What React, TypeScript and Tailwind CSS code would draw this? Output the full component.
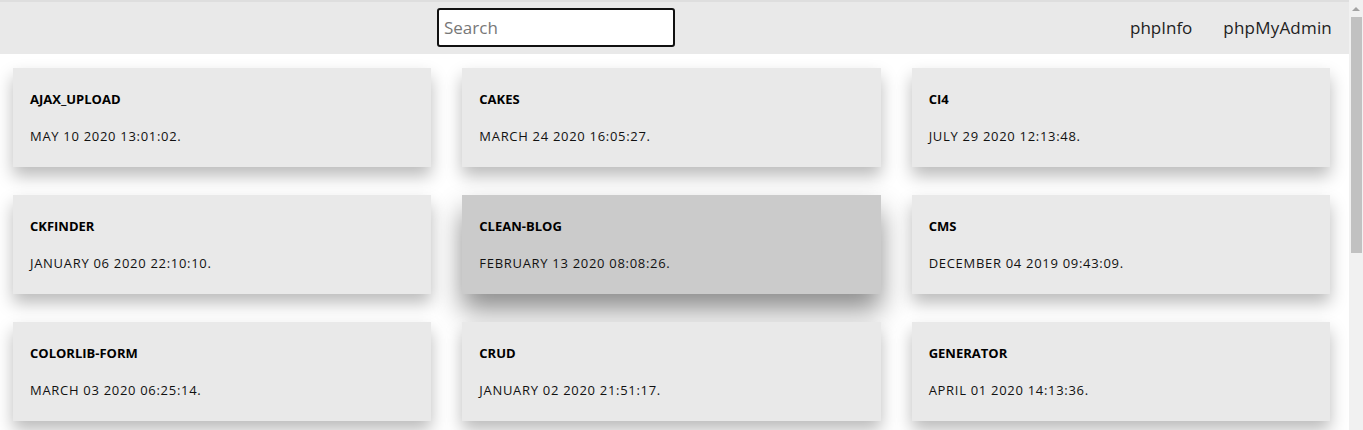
const projects = [
  { name: 'AJAX_UPLOAD', date: 'MAY 10 2020 13:01:02.' },
  { name: 'CAKES', date: 'MARCH 24 2020 16:05:27.' },
  { name: 'CI4', date: 'JULY 29 2020 12:13:48.' },
  { name: 'CKFINDER', date: 'JANUARY 06 2020 22:10:10.' },
  { name: 'CLEAN-BLOG', date: 'FEBRUARY 13 2020 08:08:26.', hover: true },
  { name: 'CMS', date: 'DECEMBER 04 2019 09:43:09.' },
  { name: 'COLORLIB-FORM', date: 'MARCH 03 2020 06:25:14.' },
  { name: 'CRUD', date: 'JANUARY 02 2020 21:51:17.' },
  { name: 'GENERATOR', date: 'APRIL 01 2020 14:13:36.' },
];

function Card({ name, date, hover }: { name: string; date: string; hover?: boolean }) {
  return (
    <div
      className={
        hover
          ? 'bg-[#cbcbcb] px-[17px] py-[22px] shadow-[0_16px_26px_rgba(0,0,0,0.45)]'
          : 'bg-[#e9e9e9] px-[17px] py-[22px] shadow-[0_9px_16px_rgba(0,0,0,0.27)]'
      }
    >
      <div className="text-[13px] leading-[18px] font-bold text-black">{name}</div>
      <div className="mt-[19px] text-[13px] leading-[18px] tracking-[0.7px] text-[#111]">{date}</div>
    </div>
  );
}

function Scrollbar() {
  // fake classic scrollbar on the right edge
  return (
    <div className="w-[14px] shrink-0 bg-[#f1f1f1] flex flex-col items-center">
      <div className="h-[17px] flex items-center justify-center">
        <div className="w-0 h-0 border-l-[4px] border-r-[4px] border-b-[4px] border-l-transparent border-r-transparent border-b-[#a3a3a3]" />
      </div>
      <div className="w-[11px] h-[236px] bg-[#c1c1c1]" />
    </div>
  );
}

export default function App() {
  return (
    <div className="flex h-[430px] overflow-hidden bg-white" style={{ fontFamily: '"Open Sans", "Liberation Sans", sans-serif' }}>
      <div className="flex-1 min-w-0">
        <header className="h-[54px] bg-[#e9e9e9] border-t-2 border-[#dedede] flex items-center">
          <input
            placeholder="Search"
            className="ml-[437px] w-[238px] h-[39px] mt-[-2px] bg-white border-2 border-[#111] rounded-[3px] px-[5px] text-[17px] outline-none placeholder:text-[#777]"
          />
          <nav className="ml-auto mr-[17px] flex gap-[31px] text-[17px] text-[#222]">
            <a href="#">phpInfo</a>
            <a href="#" className="tracking-[0.2px]">phpMyAdmin</a>
          </nav>
        </header>
        <main className="pl-[13px] pr-[19px] pt-[14px] grid grid-cols-3 gap-x-[31px] gap-y-[28px]">
          {projects.map((p) => (
            <Card key={p.name} {...p} />
          ))}
        </main>
      </div>
      <Scrollbar />
    </div>
  );
}
